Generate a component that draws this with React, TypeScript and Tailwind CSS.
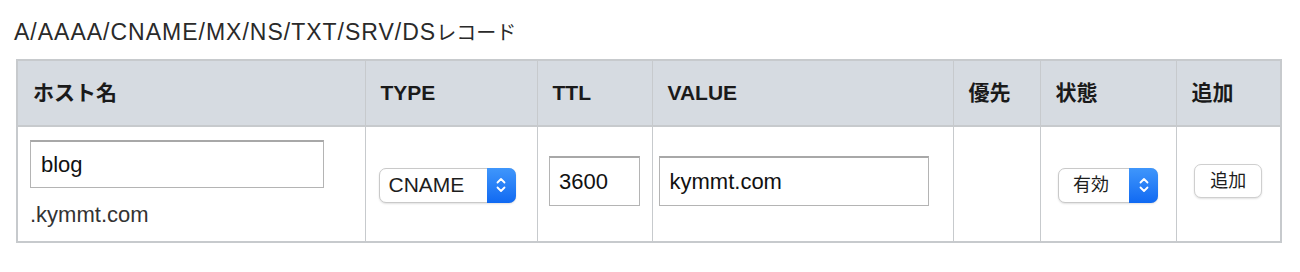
import React from 'react'

const jp = "font-['Liberation_Sans','Noto_Sans_CJK_JP',sans-serif]"

const Chevrons = () => (
  <svg width="12" height="20" viewBox="0 0 12 20" fill="none" stroke="white" strokeWidth="1.8" strokeLinecap="round" strokeLinejoin="round">
    <path d="M2.5 7.5 L6 4 L9.5 7.5" />
    <path d="M2.5 12.5 L6 16 L9.5 12.5" />
  </svg>
)

const MacSelect = ({ value, options, className, textSize }: { value: string; options: string[]; className: string; textSize: string }) => (
  <div className={`relative inline-block h-[35px] ${className}`}>
    <select
      defaultValue={value}
      className={`h-full w-full appearance-none rounded-[7px] border border-[#c9c9c9] bg-white pl-[9px] ${textSize} text-[#1d1d1d] shadow-[0_1px_2px_rgba(0,0,0,0.12)] outline-none ${jp}`}
    >
      {options.map((o) => (
        <option key={o}>{o}</option>
      ))}
    </select>
    <div className="pointer-events-none absolute top-0 right-0 flex h-full w-[29px] items-center justify-center rounded-r-[7px] bg-gradient-to-b from-[#3f96fb] to-[#1069f2]">
      <Chevrons />
    </div>
  </div>
)

const headers = ['ホスト名', 'TYPE', 'TTL', 'VALUE', '優先', '状態', '追加']

export default function App() {
  return (
    <div className={`min-h-[272px] bg-white text-[#222] ${jp}`}>
      <div className="pt-[18px] pl-[14px] text-[23px] leading-[28px] tracking-[1px] text-[#2a2a2a]">
        A/AAAA/CNAME/MX/NS/TXT/SRV/DS<span className="text-[20px] tracking-normal">レコード</span>
      </div>

      <table className="mt-[12px] ml-[16px] w-[1264px] table-fixed border-collapse border-2 border-[#c7cacd]">
        <colgroup>
          <col className="w-[348px]" />
          <col className="w-[172px]" />
          <col className="w-[115px]" />
          <col className="w-[301px]" />
          <col className="w-[87px]" />
          <col className="w-[136px]" />
          <col className="w-[105px]" />
        </colgroup>
        <thead>
          <tr className="h-[66px] bg-[#d6dbe1]">
            {headers.map((h) => (
              <th key={h} className="border border-[#c7cacd] border-b-2 px-[15px] text-left align-middle text-[21px] font-bold text-[#1a1a1a]">
                {h}
              </th>
            ))}
          </tr>
        </thead>
        <tbody>
          <tr className="h-[116px]">
            <td className="border border-[#c7cacd] pt-[13px] pb-[12px] pl-[12px] align-top">
              <input
                defaultValue="blog"
                className="block h-[48px] w-[294px] border border-[#b4b4b4] border-t-2 border-t-[#a8a8a8] px-[10px] text-[22px] text-[#111] outline-none"
              />
              <div className="mt-[13px] text-[22px] leading-[28px] text-[#333]">.kymmt.com</div>
            </td>
            <td className="border border-[#c7cacd] align-middle">
              <div className="flex justify-center pr-[8px] pt-[2px]">
                <MacSelect value="CNAME" options={['A', 'AAAA', 'CNAME', 'MX', 'NS', 'TXT', 'SRV', 'DS']} className="w-[137px]" textSize="text-[21px]" />
              </div>
            </td>
            <td className="border border-[#c7cacd] align-middle">
              <div className="flex justify-center pb-[6px]">
                <input
                  defaultValue="3600"
                  className="h-[50px] w-[91px] border border-[#b4b4b4] border-t-2 border-t-[#a8a8a8] px-[9px] text-[22px] text-[#111] outline-none"
                />
              </div>
            </td>
            <td className="border border-[#c7cacd] pl-[6px] align-middle">
              <div className="pb-[6px]">
                <input
                  defaultValue="kymmt.com"
                  className="block h-[50px] w-[270px] border border-[#b4b4b4] border-t-2 border-t-[#a8a8a8] px-[10px] text-[22px] text-[#111] outline-none"
                />
              </div>
            </td>
            <td className="border border-[#c7cacd]"></td>
            <td className="border border-[#c7cacd] align-middle">
              <div className="flex justify-center pt-[2px]">
                <MacSelect value="有効" options={['有効', '無効']} className="w-[100px]" textSize="text-[18px] pl-[14px]" />
              </div>
            </td>
            <td className="border border-[#c7cacd] align-middle">
              <div className="flex justify-center pb-[6px]">
                <button className="h-[34px] w-[68px] rounded-[7px] border border-[#cfcfcf] bg-white text-[18px] text-[#1d1d1d] shadow-[0_1px_2px_rgba(0,0,0,0.12)]">
                  追加
                </button>
              </div>
            </td>
          </tr>
        </tbody>
      </table>
    </div>
  )
}
